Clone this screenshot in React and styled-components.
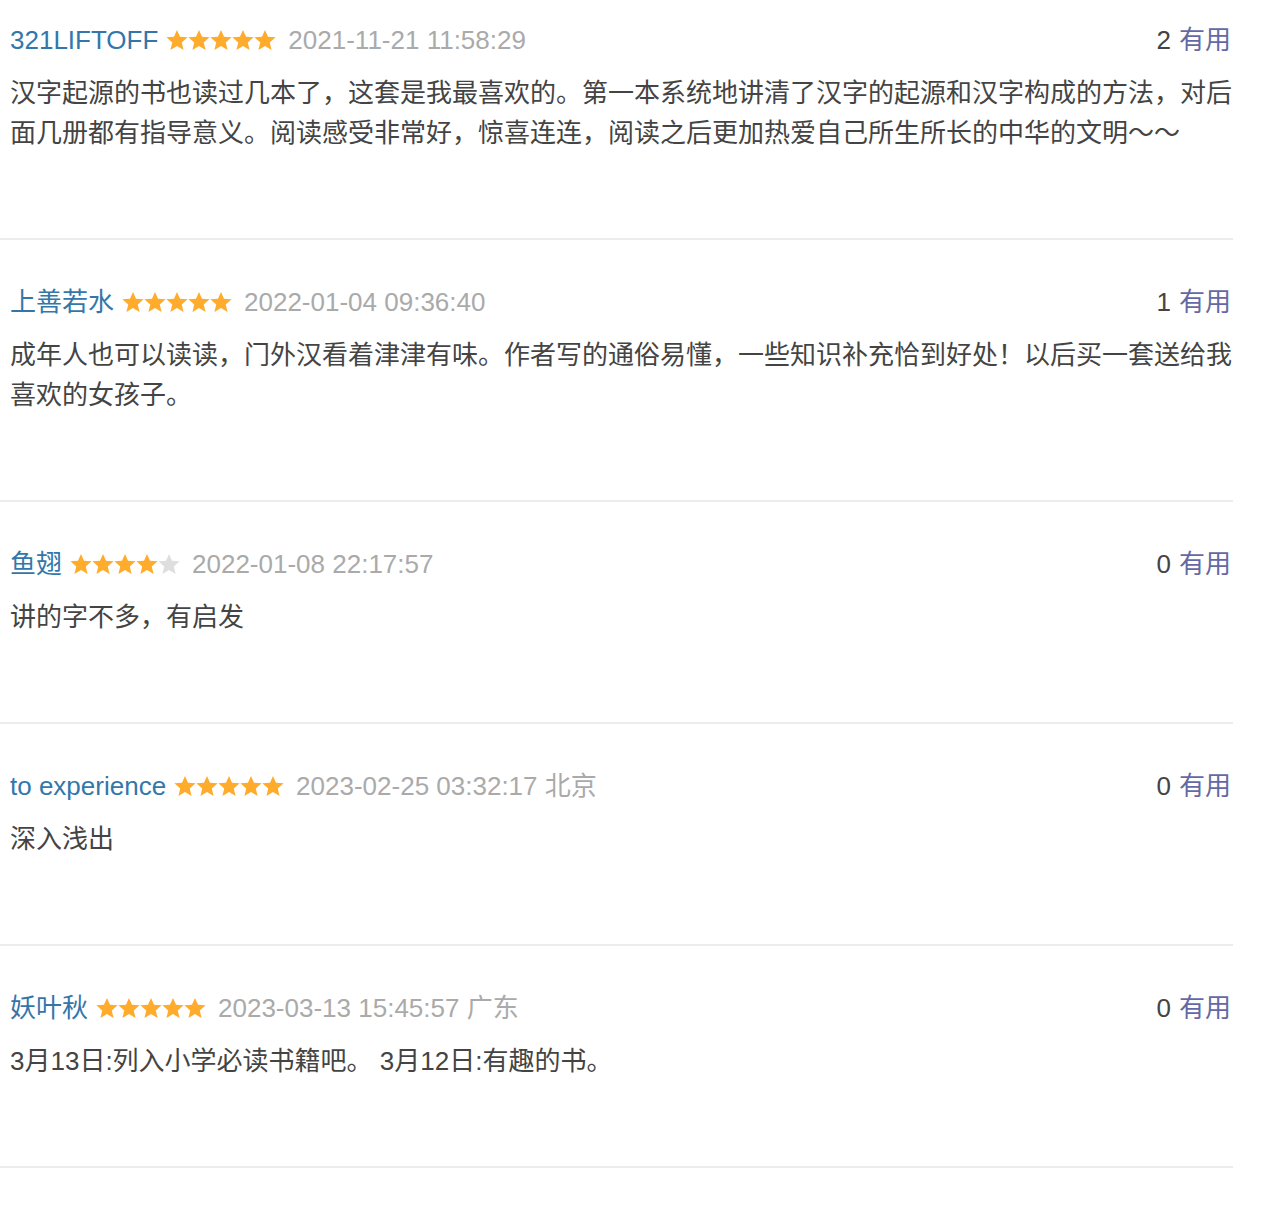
import React from "react";
import styled, { createGlobalStyle } from "styled-components";

const GlobalStyle = createGlobalStyle`
  body {
    margin: 0;
    background: #fff;
    font-family: "Liberation Sans", "Noto Sans CJK SC", sans-serif;
  }
`;

const List = styled.div`
  width: 1233px;
`;

const Item = styled.div`
  padding: 42px 0 85px 10px;
  border-bottom: 2px solid #ececec;

  &:first-child {
    padding-top: 20px;
  }
`;

const Header = styled.div`
  display: flex;
  align-items: baseline;
  justify-content: space-between;
  height: 40px;
  line-height: 40px;
  font-size: 26px;
  padding-right: 2px;
`;

const Meta = styled.div`
  display: flex;
  align-items: center;
`;

const Name = styled.span`
  color: #3377aa;
`;

const Stars = styled.span`
  display: flex;
  margin: 0 12px 0 8px;
`;

const Time = styled.span`
  color: #aaa;
`;

const Votes = styled.span`
  color: #444;
`;

const Useful = styled.span`
  color: #6469a5;
  margin-left: 8px;
`;

const Body = styled.p`
  margin: 13px 0 0;
  font-size: 26px;
  line-height: 40px;
  color: #444;
`;

const STAR =
  "12,0.5 15.3,8 23.6,8.6 17.2,14.1 19.2,22.5 12,18 4.8,22.5 6.8,14.1 0.4,8.6 8.7,8";

function Rating({ value }) {
  return (
    <Stars>
      {[0, 1, 2, 3, 4].map(i => (
        <svg key={i} width="22" height="22" viewBox="0 0 24 23">
          <polygon points={STAR} fill={i < value ? "#ffac2d" : "#dedede"} />
        </svg>
      ))}
    </Stars>
  );
}

const comments = [
  {
    name: "321LIFTOFF",
    rating: 5,
    time: "2021-11-21 11:58:29",
    votes: 2,
    text: "汉字起源的书也读过几本了，这套是我最喜欢的。第一本系统地讲清了汉字的起源和汉字构成的方法，对后面几册都有指导意义。阅读感受非常好，惊喜连连，阅读之后更加热爱自己所生所长的中华的文明～～",
  },
  {
    name: "上善若水",
    rating: 5,
    time: "2022-01-04 09:36:40",
    votes: 1,
    text: "成年人也可以读读，门外汉看着津津有味。作者写的通俗易懂，一些知识补充恰到好处！以后买一套送给我喜欢的女孩子。",
  },
  {
    name: "鱼翅",
    rating: 4,
    time: "2022-01-08 22:17:57",
    votes: 0,
    text: "讲的字不多，有启发",
  },
  {
    name: "to experience",
    rating: 5,
    time: "2023-02-25 03:32:17 北京",
    votes: 0,
    text: "深入浅出",
  },
  {
    name: "妖叶秋",
    rating: 5,
    time: "2023-03-13 15:45:57 广东",
    votes: 0,
    text: "3月13日:列入小学必读书籍吧。 3月12日:有趣的书。",
  },
];

export default function App() {
  return (
    <List>
      <GlobalStyle />
      {comments.map(c => (
        <Item key={c.time}>
          <Header>
            <Meta>
              <Name>{c.name}</Name>
              <Rating value={c.rating} />
              <Time>{c.time}</Time>
            </Meta>
            <span>
              <Votes>{c.votes}</Votes>
              <Useful>有用</Useful>
            </span>
          </Header>
          <Body>{c.text}</Body>
        </Item>
      ))}
    </List>
  );
}
